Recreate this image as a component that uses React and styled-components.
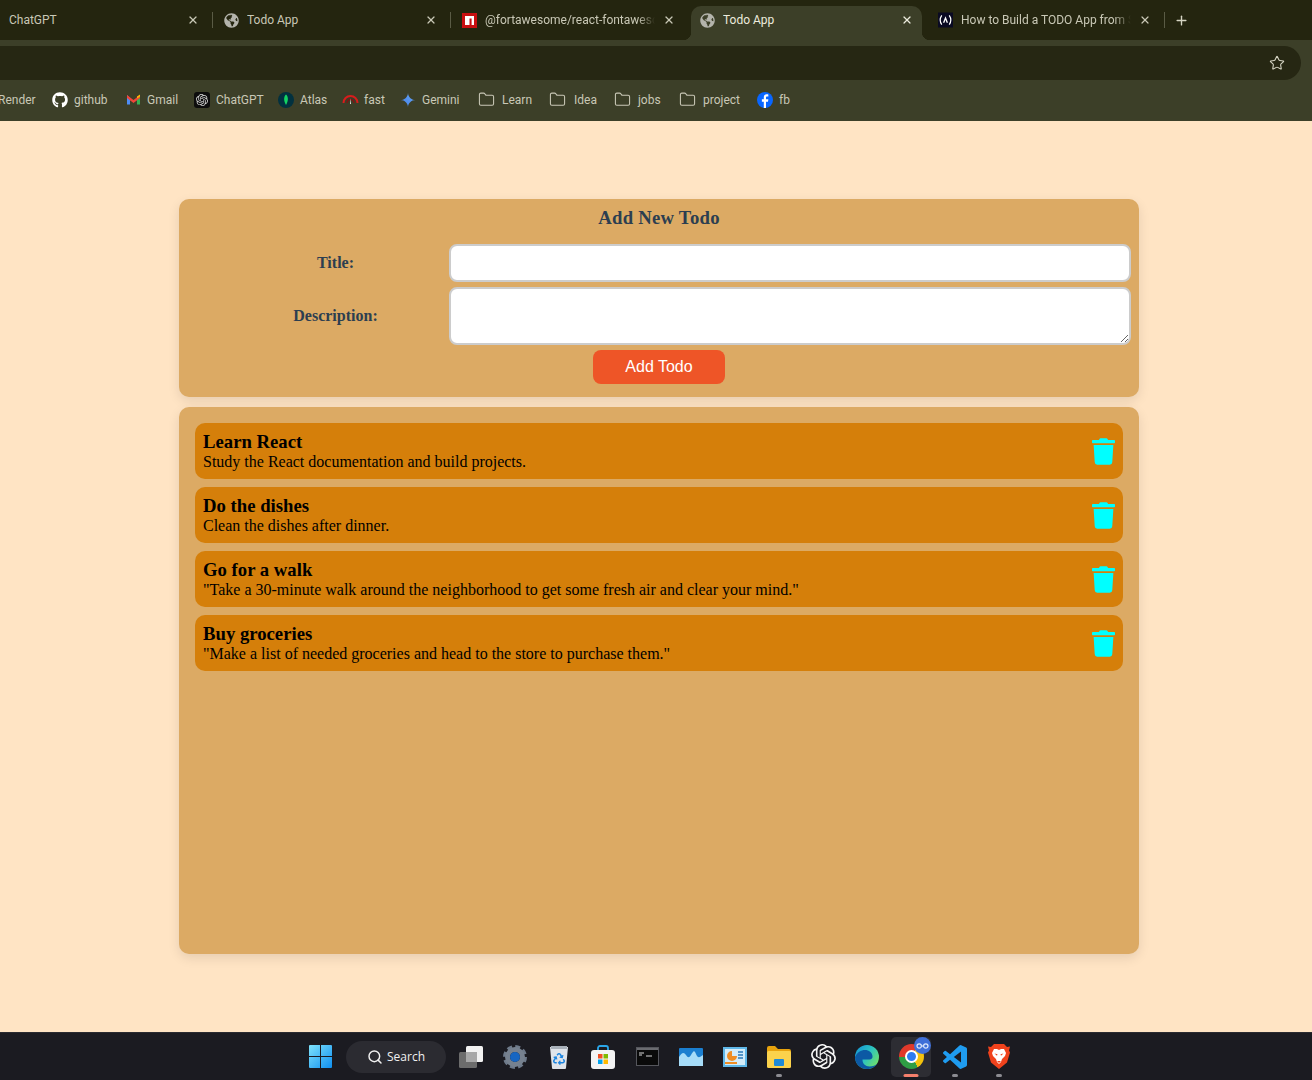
import React from 'react';
import styled, { createGlobalStyle } from 'styled-components';
import { FaTrash, FaGithub, FaGlobeAmericas, FaRecycle } from 'react-icons/fa';
import { SiOpenai } from 'react-icons/si';
import { Folder, Star, X, Plus, Search } from 'lucide-react';

const GlobalStyle = createGlobalStyle`
  html, body {
    margin: 0;
    padding: 0;
    background: #ffe4c4;
  }
  * {
    box-sizing: border-box;
  }
`;

const Screen = styled.div`
  width: 1312px;
  height: 1080px;
  display: flex;
  flex-direction: column;
  overflow: hidden;
`;

/* browser chrome */
const TabStrip = styled.div`
  height: 40px;
  flex: none;
  display: flex;
  align-items: flex-end;
  background: #24250f;
  font-family: Roboto, "Liberation Sans", sans-serif;
  font-size: 12px;
`;

const Tab = styled.div`
  position: relative;
  flex: none;
  width: ${(p) => p.$width || 237}px;
  height: 34px;
  display: flex;
  align-items: center;
  gap: 8px;
  padding: 0 14px 6px ${(p) => p.$left || 11}px;
  color: ${(p) => (p.$active ? '#ecebdd' : '#c9c8b6')};

  ${(p) => p.$active && `
    &::before {
      content: '';
      position: absolute;
      top: 0;
      bottom: 0;
      left: 2px;
      right: 4px;
      background: #3c3f28;
      border-radius: 10px 10px 0 0;
    }
    &::after {
      content: '';
      position: absolute;
      bottom: 0;
      left: -6px;
      right: -4px;
      height: 8px;
      background:
        radial-gradient(circle at 0 0, transparent 8px, #3c3f28 8.5px) left bottom / 8px 8px no-repeat,
        radial-gradient(circle at 100% 0, transparent 8px, #3c3f28 8.5px) right bottom / 8px 8px no-repeat;
    }
  `}

  & > * {
    position: relative;
    z-index: 1;
  }
`;

const TabTitle = styled.span`
  flex: 1;
  min-width: 0;
  overflow: hidden;
  white-space: nowrap;
  mask-image: ${(p) => (p.$fade ? 'linear-gradient(to right, #000 90%, transparent)' : 'none')};
`;

const TabClose = styled(X)`
  flex: none;
  width: 12px;
  height: 12px;
  margin-right: -1px;
  stroke-width: 2.4;
`;

const TabDivider = styled.i`
  flex: none;
  width: 1px;
  height: 16px;
  margin-bottom: 12px;
  background: ${(p) => (p.$hidden ? 'transparent' : '#5a5b45')};
`;

const NewTab = styled(Plus)`
  align-self: center;
  width: 15px;
  height: 15px;
  margin: 0 0 0 9px;
  color: #d6d5c4;
  stroke-width: 2.2;
`;

const Toolbar = styled.div`
  height: 40px;
  flex: none;
  padding: 6px 11px 0 0;
  background: #3c3f28;
`;

const AddressBar = styled.div`
  height: 34px;
  display: flex;
  align-items: center;
  justify-content: flex-end;
  padding-right: 16px;
  background: #262713;
  border-radius: 0 17px 17px 0;
  color: #d6d5c4;
`;

const Bookmarks = styled.div`
  height: 41px;
  flex: none;
  display: flex;
  align-items: center;
  padding-bottom: 2px;
  background: #3c3f28;
  color: #c9c8b6;
  font-family: Roboto, "Liberation Sans", sans-serif;
  font-size: 12px;
  overflow: hidden;
`;

const Bookmark = styled.div`
  flex: none;
  width: ${(p) => p.$width}px;
  display: flex;
  align-items: center;
  gap: ${(p) => p.$gap || 6}px;
  margin-left: ${(p) => p.$shift || 0}px;
`;

/* page */
const Page = styled.main`
  flex: 1;
  min-height: 0;
  display: flex;
  flex-direction: column;
  gap: 10px;
  padding: 78px 0 78px 179px;
  background: #ffe4c4;
  font-family: "Liberation Serif", "Times New Roman", serif;
`;

const Panel = styled.section`
  width: 960px;
  background: #dcaa64;
  border-radius: 10px;
  box-shadow: 0 4px 12px rgba(0, 0, 0, 0.1);
`;

const FormPanel = styled(Panel)`
  flex: none;
  height: 198px;
  display: flex;
  flex-direction: column;
  gap: 5px;
  padding-top: 8px;
`;

const FormTitle = styled.h3`
  margin: 0 0 10px;
  height: 22px;
  font-size: 18.72px;
  line-height: 22px;
  letter-spacing: 0.25px;
  font-weight: 700;
  text-align: center;
  color: #2c3e50;
`;

const FormRow = styled.label`
  display: grid;
  grid-template-columns: 228px 682px;
  align-items: center;
  padding-left: 42px;
  color: #2c3e50;
`;

const FieldName = styled.span`
  font-size: 16px;
  font-weight: 700;
  text-align: center;
  padding-left: 1px;
`;

const TextInput = styled.input`
  display: block;
  width: 100%;
  height: 38px;
  padding: 8px;
  background: #fff;
  border: 2px solid #ccc;
  border-radius: 8px;
  outline: none;
`;

const TextArea = styled.textarea`
  display: block;
  width: 100%;
  height: 58px;
  padding: 8px;
  background: #fff;
  border: 2px solid #ccc;
  border-radius: 8px;
  outline: none;
`;

const AddButton = styled.button`
  align-self: center;
  width: 132px;
  height: 34px;
  border: none;
  border-radius: 8px;
  background: #ee5527;
  color: #fff;
  font-family: "Liberation Sans", Arial, sans-serif;
  font-size: 16px;
`;

const ListPanel = styled(Panel)`
  flex: 1;
  display: flex;
  flex-direction: column;
  gap: 8px;
  padding: 16px;
`;

const TodoRow = styled.article`
  height: 56px;
  display: flex;
  align-items: center;
  justify-content: space-between;
  padding: 0 8px;
  background: #d57f0a;
  border-radius: 10px;
  color: #000;
`;

const TodoTitle = styled.div`
  font-size: 18.72px;
  line-height: 21px;
  font-weight: 700;
`;

const TodoText = styled.div`
  padding-top: 1px;
  font-size: 16px;
  line-height: 18px;
`;

const Trash = styled(FaTrash)`
  flex: none;
  width: 23px;
  height: 27px;
  color: #00ffff;
`;

/* taskbar */
const Taskbar = styled.footer`
  height: 48px;
  flex: none;
  display: flex;
  align-items: center;
  padding-left: 309px;
  background: #1b1b21;
  border-top: 1px solid #2a2a30;
`;

const SearchPill = styled.div`
  width: 100px;
  height: 32px;
  display: flex;
  align-items: center;
  justify-content: center;
  gap: 4px;
  margin: 0 3px 0 14px;
  background: #2b2b31;
  border-radius: 16px;
  color: #f0f0f0;
  font-family: "Open Sans", Roboto, sans-serif;
  font-size: 12px;
`;

const TaskSlot = styled.div`
  position: relative;
  flex: none;
  width: 44px;
  height: 40px;
  display: flex;
  align-items: center;
  justify-content: center;
`;

const ActiveTile = styled.div`
  width: 40px;
  height: 40px;
  display: flex;
  align-items: center;
  justify-content: center;
  background: #2d2d33;
  border-radius: 5px;
`;

const RunDot = styled.i`
  position: absolute;
  bottom: 0;
  left: 50%;
  transform: translateX(-50%);
  width: ${(p) => (p.$active ? 15 : 6)}px;
  height: 3px;
  border-radius: 2px;
  background: ${(p) => (p.$active ? '#f57f6c' : '#8c8c92')};
`;

const ChromeBall = styled.div`
  position: relative;
  width: 25px;
  height: 25px;
  border-radius: 50%;
  background: conic-gradient(from 30deg, #f4c20d 0 120deg, #2f9e44 120deg 240deg, #e0392b 240deg 360deg);

  &::after {
    content: '';
    position: absolute;
    inset: 6px;
    border-radius: 50%;
    background: #2f7cf0;
    border: 2px solid #fff;
  }
`;

const ProfileBadge = styled.div`
  position: absolute;
  top: 0;
  right: 2px;
  width: 17px;
  height: 17px;
  display: flex;
  align-items: center;
  justify-content: center;
  border-radius: 50%;
  background: #3f6fd8;
`;

const NpmIcon = () => (
  <svg width="15" height="15" viewBox="0 0 15 15">
    <rect width="15" height="15" fill="#c80f10" />
    <path d="M3 3h9v9H9.6V5.4H7.5V12H3z" fill="#fff" />
  </svg>
);

const FccIcon = () => (
  <svg width="15" height="16" viewBox="0 0 16 16" fill="none" stroke="#fff">
    <rect width="16" height="16" fill="#0a0a23" stroke="none" />
    <path d="M4 3C2 6 2 10 4 13M12 3c2 3 2 7 0 10" strokeWidth="1.3" />
    <path d="M6 11l2-5 2 5" strokeWidth="1.4" />
  </svg>
);

const GmailIcon = () => (
  <svg width="15" height="15" viewBox="0 0 15 15">
    <path d="M1 3v9.5h3V6z" fill="#4d8df6" />
    <path d="M14 3v9.5h-3V6z" fill="#34b354" />
    <path d="M1 3l6.5 5L14 3v3L7.500 11 1 6z" fill="#f04438" />
    <path d="M11 4.500L14 2.500v2L11 6.500z" fill="#fbbc04" />
  </svg>
);

const GptBadge = () => (
  <svg width="16" height="16" viewBox="0 0 16 16">
    <rect width="16" height="16" rx="3" fill="#0d0d0d" />
    <SiOpenai x="2" y="2" size={12} color="#d9d9d9" />
  </svg>
);

const AtlasIcon = () => (
  <svg width="16" height="16" viewBox="0 0 16 16">
    <circle cx="8" cy="8" r="8" fill="#02313f" />
    <path d="M8 2.500c2.200 2 2.800 5.600 0 10.500-2.800-4.900-2.200-8.500 0-10.500z" fill="#13d463" />
  </svg>
);

const FastIcon = () => (
  <svg width="17" height="16" viewBox="0 0 17 16" fill="none">
    <path d="M1.500 11a7 7 0 0 1 14 0" stroke="#d81c1c" strokeWidth="2" />
    <path d="M5 11a3.500 3.500 0 0 1 7 0" stroke="#7d1414" strokeWidth="1.500" />
    <path d="M8 12l.500-6 .500 6z" fill="#e8e8e8" />
  </svg>
);

const GeminiIcon = () => (
  <svg width="16" height="16" viewBox="0 0 24 24">
    <defs>
      <linearGradient id="gem" x1="0" y1="1" x2="1" y2="0">
        <stop offset="0" stopColor="#3f7de8" />
        <stop offset="1" stopColor="#6aa8f5" />
      </linearGradient>
    </defs>
    <path d="M12 1c0 6 5 11 11 11-6 0-11 5-11 11 0-6-5-11-11-11 6 0 11-5 11-11z" fill="url(#gem)" />
  </svg>
);

const FbIcon = () => (
  <svg width="16" height="16" viewBox="0 0 24 24">
    <circle cx="12" cy="12" r="12" fill="#0866ff" />
    <path d="M13.500 24v-9.500h3l.5-3.500h-3.500V8.600c0-1 .4-1.800 1.800-1.800H17V3.700c-.5-.1-1.400-.2-2.500-.2-2.600 0-4.300 1.600-4.300 4.400V11H7.300v3.500h2.900V24z" fill="#fff" />
  </svg>
);

const FolderIcon = () => <Folder size={17} strokeWidth={1.5} color="#c9c8b6" />;

const WinLogo = () => (
  <svg width="23" height="23" viewBox="0 0 23 23">
    <defs>
      <linearGradient id="win" x1="0" y1="0" x2="1" y2="1">
        <stop offset="0" stopColor="#7fe3fb" />
        <stop offset="1" stopColor="#0f8ff0" />
      </linearGradient>
    </defs>
    <path d="M0 1a1 1 0 0 1 1-1h10v11H0zM12 0h10a1 1 0 0 1 1 1v10H12zM0 12h11v11H1a1 1 0 0 1-1-1zM12 12h11v10a1 1 0 0 1-1 1H12z" fill="url(#win)" />
  </svg>
);

const TaskViewIcon = () => (
  <svg width="24" height="22" viewBox="0 0 24 22">
    <rect x="7" y="0" width="17" height="16" rx="1.500" fill="#f2f2f2" />
    <rect x="0" y="6" width="18" height="16" rx="1.500" fill="#6c6c6c" />
    <rect x="7" y="6" width="11" height="10" fill="#a8a8a8" />
  </svg>
);

const GearIcon = () => (
  <svg width="24" height="24" viewBox="0 0 24 24" fill="none">
    <circle cx="12" cy="12" r="10.500" stroke="#6e7a8a" strokeWidth="3" strokeDasharray="5 3.240" />
    <circle cx="12" cy="12" r="7.500" stroke="#76818f" strokeWidth="5" />
    <circle cx="12" cy="12" r="5" fill="#1766c2" />
  </svg>
);

const BinIcon = () => (
  <svg width="20" height="24" viewBox="0 0 20 24">
    <path d="M1 2h18l-2 21a1 1 0 0 1-1 1H4a1 1 0 0 1-1-1z" fill="#dfe4ea" />
    <path d="M2 1h16v3H2z" fill="#a9b1ba" />
    <FaRecycle x="4" y="8" size={12} color="#1b84e0" />
  </svg>
);

const StoreIcon = () => (
  <svg width="24" height="24" viewBox="0 0 24 24" fill="none">
    <path d="M7 6V3a2 2 0 0 1 2-2h6a2 2 0 0 1 2 2v3" stroke="#2aa6e8" strokeWidth="1.800" />
    <rect y="5" width="24" height="19" rx="3" fill="#f4f4f4" />
    <rect x="7" y="9" width="4.500" height="4.500" fill="#f25022" />
    <rect x="12.500" y="9" width="4.500" height="4.500" fill="#7fba00" />
    <rect x="7" y="14.500" width="4.500" height="4.500" fill="#00a4ef" />
    <rect x="12.500" y="14.500" width="4.500" height="4.500" fill="#ffb900" />
  </svg>
);

const ConsoleIcon = () => (
  <svg width="23" height="19" viewBox="0 0 23 19" fill="none">
    <rect x=".5" y=".5" width="22" height="18" fill="#0a0a0a" stroke="#55565c" />
    <rect x="1" y="1" width="21" height="2" fill="#6a6b70" />
    <path d="M3 6h5M3 8h3M10 9h6" stroke="#d8d8d8" />
  </svg>
);

const WaveIcon = () => (
  <svg width="24" height="18" viewBox="0 0 24 18">
    <rect width="24" height="18" rx="1" fill="#1b7fd0" />
    <path d="M0 9c3-5 5-5 7-2s3 3 5 0 3-6 5-1 4 3 7 1v11H0z" fill="#a6dcf8" />
  </svg>
);

const PanelIcon = () => (
  <svg width="24" height="20" viewBox="0 0 24 20">
    <rect width="24" height="20" fill="#5fb7e8" />
    <rect x="2" y="2" width="20" height="16" fill="#d3ecf9" />
    <path d="M9 4a5 5 0 1 0 5 5H9z" fill="#ef8d24" />
    <rect x="2" y="15" width="12" height="2" fill="#ef8d24" />
    <path d="M15 5h5M15 8h5M15 11h5" stroke="#2b78b8" strokeWidth="1.500" />
  </svg>
);

const ExplorerIcon = () => (
  <svg width="24" height="22" viewBox="0 0 24 22">
    <path d="M0 2a2 2 0 0 1 2-2h6l3 3h11a2 2 0 0 1 2 2v3H0z" fill="#e8a30d" />
    <rect y="5" width="24" height="17" rx="1.500" fill="#fbd24c" />
    <rect x="7" y="13" width="10" height="7" rx="1" fill="#1f8ad6" />
  </svg>
);

const EdgeIcon = () => (
  <svg width="24" height="24" viewBox="0 0 24 24">
    <defs>
      <linearGradient id="edge" x1="0" y1="0" x2="1" y2=".7">
        <stop offset="0" stopColor="#128fd8" />
        <stop offset=".55" stopColor="#2cc3c0" />
        <stop offset="1" stopColor="#6fe06a" />
      </linearGradient>
    </defs>
    <circle cx="12" cy="12" r="12" fill="url(#edge)" />
    <path d="M12 24C5 24 0 18.500 0 12 2 7.500 6 5 10 5c4 0 7 2.500 7.500 6 .3 2-1 3.500-3 3.500h-7c-.3 4 3 7 7 7 3.500 0 6-1 8-3-2 3-5.500 5.500-10.500 5.500z" fill="#0c59a4" />
  </svg>
);

const VsCodeIcon = () => (
  <svg width="24" height="24" viewBox="0 0 24 24">
    <path d="M23.150 2.587L18.210.21a1.494 1.494 0 0 0-1.705.29l-9.460 8.630-4.120-3.128a.999.999 0 0 0-1.276.057L.327 7.261A1 1 0 0 0 .326 8.740L3.899 12 .326 15.260a1 1 0 0 0 .001 1.479L1.650 17.940a.999.999 0 0 0 1.276.057l4.120-3.128 9.460 8.630a1.492 1.492 0 0 0 1.704.29l4.942-2.377A1.500 1.500 0 0 0 24 20.060V3.939a1.500 1.500 0 0 0-.850-1.352zm-5.146 14.861L10.826 12l7.178-5.448v10.896z" fill="#1f9cf0" />
  </svg>
);

const BraveIcon = () => (
  <svg width="22" height="25" viewBox="0 0 22 25">
    <path d="M6 0h10l3 3 3-.5-1 4 1 2-3 10-8 6.500-8-6.500L0 8.500l1-2-1-4 3 .5z" fill="#f0421c" />
    <path d="M6 5h3l2 1 2-1h3l2 4-1 3-3 3-1 3-2 2-2-2-1-3-3-3-1-3z" fill="#fff" />
    <path d="M6.500 9.500l3 .8-.5 1.500zM15.500 9.500l-3 .8.5 1.500zM9 17h4l-2 2z" fill="#f0421c" />
  </svg>
);

const tabs = [
  { title: 'ChatGPT', width: 212, left: 9 },
  { title: 'Todo App', icon: <FaGlobeAmericas size={15} color="#b4b4ac" /> },
  { title: '@fortawesome/react-fontawesome', icon: <NpmIcon />, fade: true, noDivider: true },
  { title: 'Todo App', icon: <FaGlobeAmericas size={15} color="#b4b4ac" />, active: true, noDivider: true },
  { title: 'How to Build a TODO App from Scratch', icon: <FccIcon />, fade: true },
];

const bookmarks = [
  { label: 'Render', shift: -2, width: 54 },
  { label: 'github', icon: <FaGithub size={16} color="#fff" />, width: 74 },
  { label: 'Gmail', icon: <GmailIcon />, width: 68 },
  { label: 'ChatGPT', icon: <GptBadge />, width: 84 },
  { label: 'Atlas', icon: <AtlasIcon />, width: 64 },
  { label: 'fast', icon: <FastIcon />, gap: 5, width: 58 },
  { label: 'Gemini', icon: <GeminiIcon />, width: 78 },
  { label: 'Learn', icon: <FolderIcon />, gap: 7, width: 71 },
  { label: 'Idea', icon: <FolderIcon />, gap: 8, width: 65 },
  { label: 'jobs', icon: <FolderIcon />, gap: 7, width: 65 },
  { label: 'project', icon: <FolderIcon />, gap: 7, width: 78 },
  { label: 'fb', icon: <FbIcon />, width: 40 },
];

const todos = [
  { title: 'Learn React', text: 'Study the React documentation and build projects.' },
  { title: 'Do the dishes', text: 'Clean the dishes after dinner.' },
  { title: 'Go for a walk', text: '"Take a 30-minute walk around the neighborhood to get some fresh air and clear your mind."' },
  { title: 'Buy groceries', text: '"Make a list of needed groceries and head to the store to purchase them."' },
];

const App = () => (
  <Screen>
    <GlobalStyle />
    <TabStrip>
      {tabs.map((tab, i) => (
        <React.Fragment key={i}>
          <Tab $width={tab.width} $left={tab.left} $active={tab.active}>
            {tab.icon}
            <TabTitle $fade={tab.fade}>{tab.title}</TabTitle>
            <TabClose />
          </Tab>
          <TabDivider $hidden={tab.noDivider} />
        </React.Fragment>
      ))}
      <NewTab />
    </TabStrip>
    <Toolbar>
      <AddressBar>
        <Star size={16} strokeWidth={1.6} />
      </AddressBar>
    </Toolbar>
    <Bookmarks>
      {bookmarks.map((b) => (
        <Bookmark key={b.label} $width={b.width} $gap={b.gap} $shift={b.shift}>
          {b.icon}
          <span>{b.label}</span>
        </Bookmark>
      ))}
    </Bookmarks>

    <Page>
      <FormPanel>
        <FormTitle>Add New Todo</FormTitle>
        <FormRow>
          <FieldName>Title:</FieldName>
          <TextInput type="text" />
        </FormRow>
        <FormRow>
          <FieldName>Description:</FieldName>
          <TextArea />
        </FormRow>
        <AddButton type="button">Add Todo</AddButton>
      </FormPanel>
      <ListPanel>
        {todos.map((todo) => (
          <TodoRow key={todo.title}>
            <div>
              <TodoTitle>{todo.title}</TodoTitle>
              <TodoText>{todo.text}</TodoText>
            </div>
            <Trash />
          </TodoRow>
        ))}
      </ListPanel>
    </Page>

    <Taskbar>
      <WinLogo />
      <SearchPill>
        <Search size={16} strokeWidth={2.2} />
        Search
      </SearchPill>
      <TaskSlot><TaskViewIcon /></TaskSlot>
      <TaskSlot><GearIcon /></TaskSlot>
      <TaskSlot><BinIcon /></TaskSlot>
      <TaskSlot><StoreIcon /></TaskSlot>
      <TaskSlot><ConsoleIcon /></TaskSlot>
      <TaskSlot><WaveIcon /></TaskSlot>
      <TaskSlot><PanelIcon /></TaskSlot>
      <TaskSlot><ExplorerIcon /><RunDot /></TaskSlot>
      <TaskSlot><SiOpenai size={25} color="#f4f4f4" /></TaskSlot>
      <TaskSlot><EdgeIcon /></TaskSlot>
      <TaskSlot>
        <ActiveTile><ChromeBall /></ActiveTile>
        <ProfileBadge>
          <svg width="13" height="8" viewBox="0 0 13 8" fill="none" stroke="#dfe8fb" strokeWidth="1.200">
            <circle cx="3.200" cy="5" r="2.200" />
            <circle cx="9.800" cy="5" r="2.200" />
            <path d="M5.400 5h2.200" />
          </svg>
        </ProfileBadge>
        <RunDot $active />
      </TaskSlot>
      <TaskSlot><VsCodeIcon /><RunDot /></TaskSlot>
      <TaskSlot><BraveIcon /><RunDot /></TaskSlot>
    </Taskbar>
  </Screen>
);

export default App;
